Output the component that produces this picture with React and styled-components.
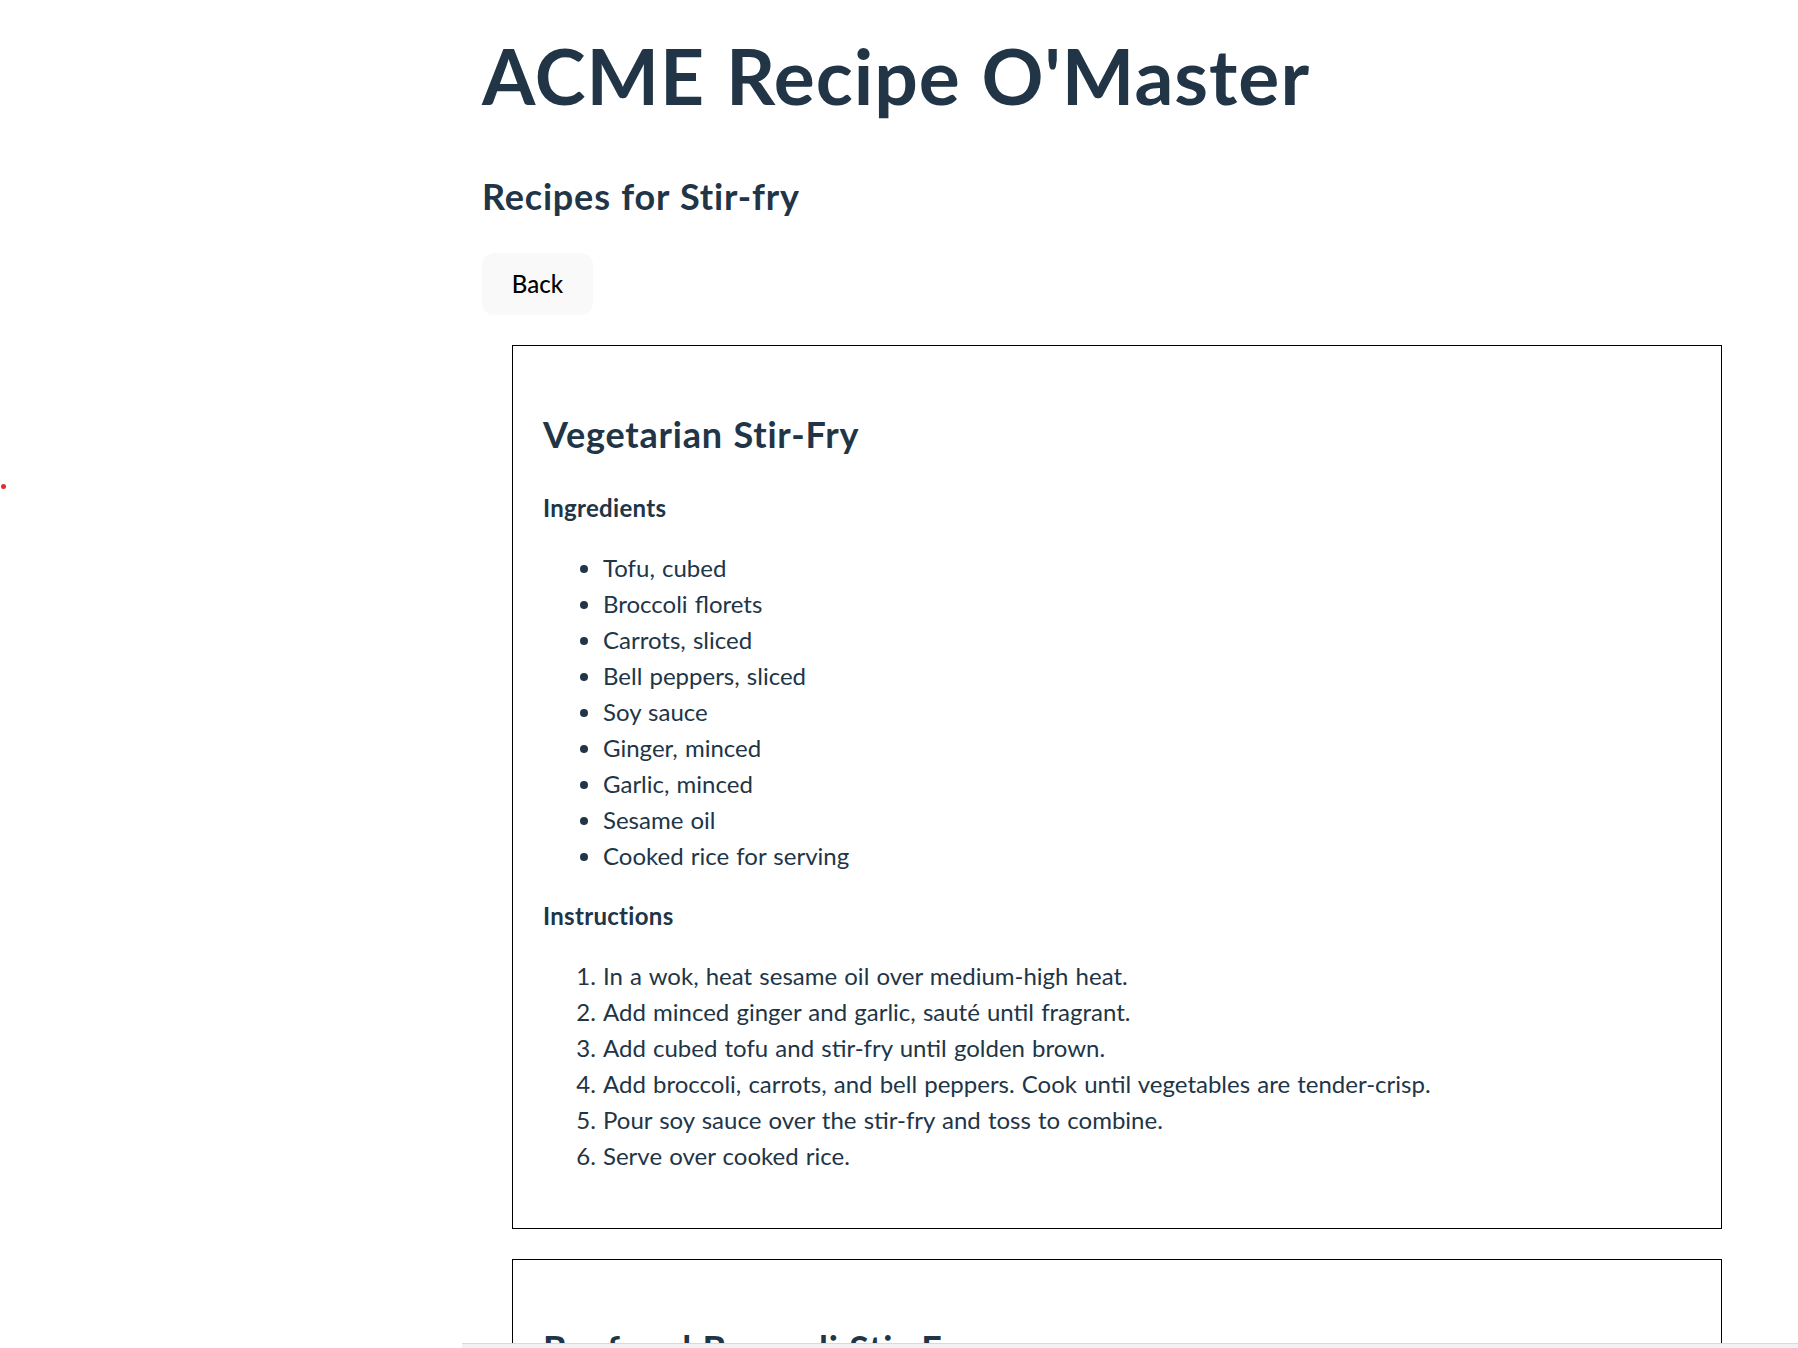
import styled, { createGlobalStyle } from "styled-components";

const GlobalStyle = createGlobalStyle`
  html, body {
    margin: 0;
    padding: 0;
    background: #ffffff;
  }
  body {
    font-family: "Lato", "Open Sans", sans-serif;
    font-size: 24px;
    line-height: 1.5;
    font-weight: 400;
    color: #213547;
    word-spacing: 1px;
  }
`;

const Viewport = styled.div`
  position: relative;
  height: 100vh;
  overflow: hidden;
`;

const Page = styled.div`
  padding: 33px 46px 0 482px;
`;

const Title = styled.h1`
  margin: 0 0 51.5px;
  font-size: 76.8px;
  line-height: 1.1;
  font-weight: 700;
  letter-spacing: 1px;
`;

const SubTitle = styled.h2`
  margin: 29.9px 0;
  font-size: 36px;
  line-height: 1.5;
  font-weight: 700;
  letter-spacing: 0.8px;
`;

const BackButton = styled.button`
  display: block;
  width: fit-content;
  padding: 14.4px 28.8px;
  border: 1.5px solid transparent;
  border-radius: 12px;
  background-color: #f9f9f9;
  color: #000;
  font-family: inherit;
  font-size: 24px;
  font-weight: 500;
  line-height: 31px;
  cursor: pointer;
  transition: border-color 0.25s;

  &:hover {
    border-color: #646cff;
  }
`;

const RecipeCard = styled.div`
  margin: 30px;
  padding: 31px 30px 30px;
  border: 1.5px solid #000;
`;

const SectionTitle = styled.h4`
  margin: 24px 0;
  font-size: 24px;
  line-height: 1.5;
  font-weight: 700;
  letter-spacing: 0.3px;
`;

const IngredientList = styled.ul`
  margin: 24px 0;
  padding-left: 60px;
  list-style: disc;
`;

const StepList = styled.ol`
  margin: 24px 0;
  padding-left: 60px;
  list-style: decimal;
`;

const Dot = styled.div`
  position: absolute;
  left: 1px;
  top: 484px;
  width: 5px;
  height: 5px;
  border-radius: 50%;
  background: #e52a2a;
`;

const ScrollTrack = styled.div`
  position: fixed;
  left: 462px;
  right: 0;
  bottom: 0;
  height: 4px;
  background: #f1f1f1;
  border-top: 1px solid #dadada;
`;

const recipes = [
    {
        id: 1,
        name: "Vegetarian Stir-Fry",
        ingredients: [
            "Tofu, cubed",
            "Broccoli florets",
            "Carrots, sliced",
            "Bell peppers, sliced",
            "Soy sauce",
            "Ginger, minced",
            "Garlic, minced",
            "Sesame oil",
            "Cooked rice for serving",
        ],
        instructions: [
            "In a wok, heat sesame oil over medium-high heat.",
            "Add minced ginger and garlic, sauté until fragrant.",
            "Add cubed tofu and stir-fry until golden brown.",
            "Add broccoli, carrots, and bell peppers. Cook until vegetables are tender-crisp.",
            "Pour soy sauce over the stir-fry and toss to combine.",
            "Serve over cooked rice.",
        ],
    },
    {
        id: 2,
        name: "Beef and Broccoli Stir-Fry",
        ingredients: [
            "Beef sirloin, thinly sliced",
            "Broccoli florets",
            "Soy sauce",
            "Oyster sauce",
            "Garlic, minced",
            "Cornstarch",
            "Vegetable oil",
        ],
        instructions: [
            "Toss beef with cornstarch and soy sauce.",
            "Stir-fry beef in hot oil until browned, then set aside.",
            "Stir-fry broccoli and garlic until tender-crisp.",
            "Return beef to the wok, add oyster sauce and toss.",
        ],
    },
];

function App() {
    return (
        <>
            <GlobalStyle />
            <Viewport>
                <Page>
                    <Title>ACME Recipe O'Master</Title>
                    <SubTitle>Recipes for Stir-fry</SubTitle>
                    <BackButton>Back</BackButton>
                    {recipes.map((recipe) => (
                        <RecipeCard key={recipe.id}>
                            <SubTitle>{recipe.name}</SubTitle>
                            <SectionTitle>Ingredients</SectionTitle>
                            <IngredientList>
                                {recipe.ingredients.map((item) => (
                                    <li key={item}>{item}</li>
                                ))}
                            </IngredientList>
                            <SectionTitle>Instructions</SectionTitle>
                            <StepList>
                                {recipe.instructions.map((step) => (
                                    <li key={step}>{step}</li>
                                ))}
                            </StepList>
                        </RecipeCard>
                    ))}
                </Page>
                <Dot />
                <ScrollTrack />
            </Viewport>
        </>
    );
}

export default App;
